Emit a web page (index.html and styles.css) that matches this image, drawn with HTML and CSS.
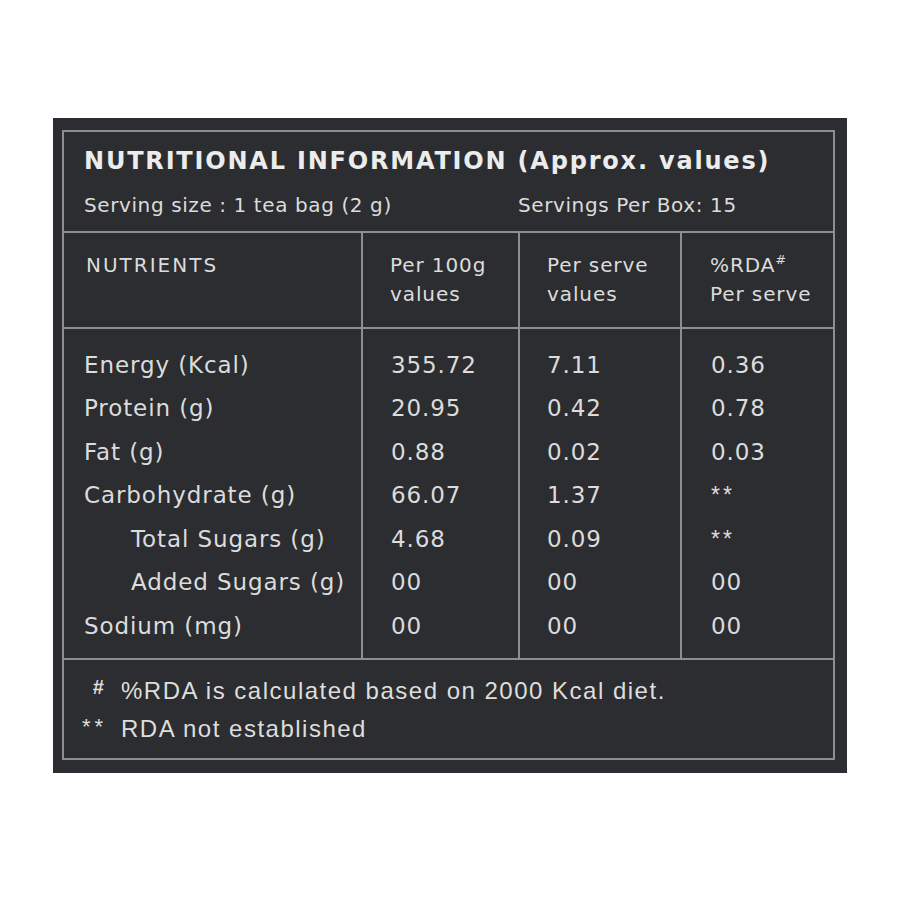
FILE: index.html
```html
<!DOCTYPE html>
<html>
<head>
<meta charset="utf-8">
<link rel="stylesheet" href="styles.css">
</head>
<body>
<div class="page">
  <div class="card">
    <div class="panel">
      <div class="head">
        <div class="title">NUTRITIONAL INFORMATION (Approx. values)</div>
        <div class="serving">
          <span>Serving size : 1 tea bag (2 g)</span>
          <span>Servings Per Box: 15</span>
        </div>
      </div>
      <div class="grid colhead">
        <div class="cell c0">NUTRIENTS</div>
        <div class="cell c1">Per 100g<br>values</div>
        <div class="cell c2">Per serve<br>values</div>
        <div class="cell c3">%RDA<sup class="hash">#</sup><br>Per serve</div>
      </div>
      <div class="grid rows">
        <div class="cell c0">
          <div class="r">Energy (Kcal)</div>
          <div class="r">Protein (g)</div>
          <div class="r">Fat (g)</div>
          <div class="r">Carbohydrate (g)</div>
          <div class="r indent">Total Sugars (g)</div>
          <div class="r indent">Added Sugars (g)</div>
          <div class="r">Sodium (mg)</div>
        </div>
        <div class="cell c1">
          <div class="r">355.72</div>
          <div class="r">20.95</div>
          <div class="r">0.88</div>
          <div class="r">66.07</div>
          <div class="r">4.68</div>
          <div class="r">00</div>
          <div class="r">00</div>
        </div>
        <div class="cell c2">
          <div class="r">7.11</div>
          <div class="r">0.42</div>
          <div class="r">0.02</div>
          <div class="r">1.37</div>
          <div class="r">0.09</div>
          <div class="r">00</div>
          <div class="r">00</div>
        </div>
        <div class="cell c3">
          <div class="r">0.36</div>
          <div class="r">0.78</div>
          <div class="r">0.03</div>
          <div class="r"><span class="stars">**</span></div>
          <div class="r"><span class="stars">**</span></div>
          <div class="r">00</div>
          <div class="r">00</div>
        </div>
      </div>
      <div class="foot">
        <div class="fline"><span class="mark mhash">#</span><span class="ftext">%RDA is calculated based on 2000 Kcal diet.</span></div>
        <div class="fline"><span class="mark mstar">**</span><span class="ftext">RDA not established</span></div>
      </div>
    </div>
  </div>
</div>
</body>
</html>
```

FILE: styles.css
```css
html, body {
  margin: 0;
  padding: 0;
  background: #ffffff;
}

.page {
  padding: 118px 0 0 53px;
}

.card {
  width: 794px;
  height: 655px;
  box-sizing: border-box;
  background: #2b2d30;
  padding: 12px 12px 13px 9px;
  color: #dcdcdc;
  font-family: "DejaVu Sans", sans-serif;
}

.panel {
  height: 630px;
  box-sizing: border-box;
  border: 2px solid #8e8e8e;
  display: flex;
  flex-direction: column;
}

.head {
  padding: 14px 0 14px 20px;
  border-bottom: 2px solid #8e8e8e;
}

.title {
  font-weight: bold;
  font-size: 24px;
  line-height: 30px;
  letter-spacing: 1.8px;
  color: #ececec;
}

.serving {
  margin-top: 17px;
  display: grid;
  grid-template-columns: 434px auto;
  font-size: 20px;
  line-height: 24px;
  letter-spacing: 0.6px;
}

.grid {
  display: grid;
  grid-template-columns: 297px 157px 162px 153px;
}

.cell {
  box-sizing: border-box;
}

.c1, .c2, .c3 {
  border-left: 2px solid #8e8e8e;
}

.colhead {
  border-bottom: 2px solid #8e8e8e;
  font-size: 20px;
  line-height: 29px;
  letter-spacing: 0.9px;
}

.colhead .cell {
  padding-top: 18px;
  padding-bottom: 18px;
}

.colhead .c0 {
  padding-left: 22px;
  letter-spacing: 2px;
}

.colhead .c1 { padding-left: 27px; }
.colhead .c2 { padding-left: 27px; }
.colhead .c3 { padding-left: 28px; }

.hash {
  font-size: 13px;
  line-height: 0;
  vertical-align: 8px;
  font-style: italic;
}

.rows {
  border-bottom: 2px solid #8e8e8e;
  font-size: 23px;
  letter-spacing: 0.9px;
}

.rows .cell {
  padding-top: 14.7px;
  padding-bottom: 9.8px;
}

.rows .c0 { padding-left: 20px; }
.rows .c1 { padding-left: 28px; }
.rows .c2 { padding-left: 27px; }
.rows .c3 { padding-left: 29px; }

.r {
  height: 43.5px;
  line-height: 43.5px;
  white-space: nowrap;
}

.indent {
  padding-left: 47px;
}

.stars {
  font-family: "Liberation Sans", sans-serif;
  font-size: 23px;
  letter-spacing: 3px;
  vertical-align: 3px;
}

.foot {
  flex: 1;
  padding-top: 12px;
  font-family: "Liberation Sans", sans-serif;
  font-size: 24px;
  letter-spacing: 1.5px;
  color: #dedede;
}

.fline {
  display: flex;
  height: 38px;
  line-height: 38px;
}

.mark {
  width: 43px;
  text-align: right;
  margin-right: 14px;
}

.mhash {
  font-style: italic;
  font-weight: bold;
  font-size: 20px;
  line-height: 30px;
  padding-right: 2px;
  width: 41px;
}

.mstar {
  font-size: 22px;
  letter-spacing: 4px;
  line-height: 34px;
}

.ftext {
  white-space: nowrap;
}
```
